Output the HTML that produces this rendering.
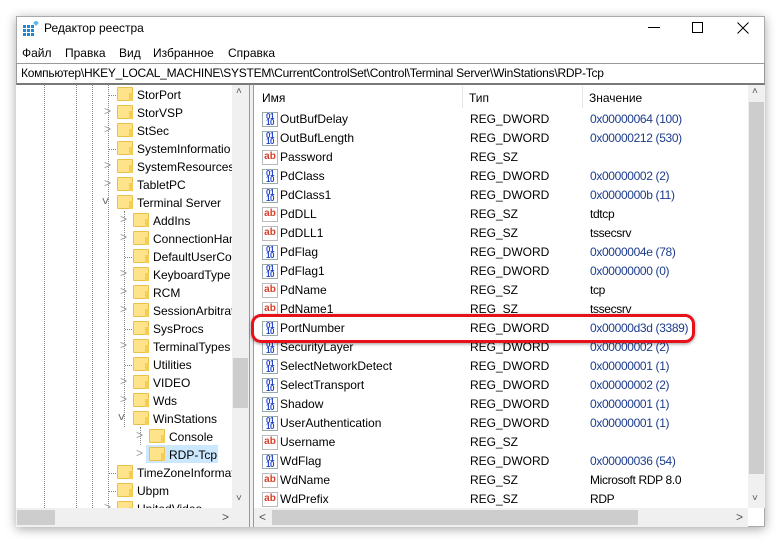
<!DOCTYPE html>
<html><head><meta charset="utf-8"><style>
*{margin:0;padding:0;box-sizing:border-box}
body{width:783px;height:543px;background:#fff;position:relative;overflow:hidden;font-family:"Liberation Sans",sans-serif;font-size:12px;color:#000}
.win{position:absolute;left:16px;top:16px;width:749px;height:511px;background:#fff;box-shadow:0 2px 10px rgba(0,0,0,.35);border:1px solid #aaa}
.a{position:absolute;white-space:nowrap}
.tree{position:absolute;left:16px;top:85px;width:216px;height:423px;overflow:hidden;background:#fff}
.dotv{position:absolute;width:0;border-left:1px dotted #888}
.dh{position:absolute;height:0;width:9px;border-top:1px dotted #888}
.fold{position:absolute;width:16px;height:14px;background:#ffe38a;border:1px solid #e8c04c;border-radius:1px}
.fold:after{content:"";position:absolute;right:-1px;bottom:-1px;width:4px;height:8px;background:#f4cd55}
.chev{position:absolute;color:#999;font-size:12px}
.tt{position:absolute;white-space:nowrap;line-height:18px}
.rows{position:absolute;left:256px;top:110px;width:491px;height:398px;overflow:hidden}
.r{position:absolute;left:0;height:19px;width:491px;line-height:19px;white-space:nowrap}
.r .n{position:absolute;left:24px}.r .t{position:absolute;left:214px}.r .v{position:absolute;left:334px;letter-spacing:-0.35px}
.ib{position:absolute;left:6px;top:2px;width:16px;height:15px;border:1px solid #9aa;background:#fff;font-size:8px;line-height:6px;color:#2244cc;font-weight:bold;text-align:center;padding-top:1px;letter-spacing:-.5px}
.is{position:absolute;left:6px;top:2px;width:16px;height:15px;border:1px solid #bbb;background:#fff;color:#d8402a;font-weight:bold;font-size:10px;line-height:12px;text-align:center}
.blue{color:#1c3c8c}
</style></head><body>
<div class="win"></div>
<svg class="a" style="left:23px;top:21px" width="16" height="16" viewBox="0 0 16 16"><g fill="#1e88d6"><rect x="0" y="4" width="3" height="3"/><rect x="4" y="4" width="3" height="3"/><rect x="8" y="4" width="3" height="3"/><rect x="0" y="8" width="3" height="3"/><rect x="4" y="8" width="3" height="3"/><rect x="8" y="8" width="3" height="3"/><rect x="0" y="12" width="3" height="3"/><rect x="4" y="12" width="3" height="3"/><rect x="8" y="12" width="3" height="3"/></g><rect x="11" y="0" width="4" height="4" fill="#5cb8f0" transform="rotate(45 13 2)"/></svg>
<div class="a" style="left:44px;top:21px;font-size:12px">Редактор реестра</div>
<div class="a" style="left:648px;top:27px;width:12px;height:1px;background:#000"></div>
<div class="a" style="left:692px;top:22px;width:11px;height:11px;border:1px solid #000"></div>
<svg class="a" style="left:737px;top:22px" width="12" height="12"><path d="M0.5 0.5L11.5 11.5M11.5 0.5L0.5 11.5" stroke="#000" stroke-width="1"/></svg>
<div class="a" style="left:22px;top:46px">Файл</div>
<div class="a" style="left:65px;top:46px">Правка</div>
<div class="a" style="left:119px;top:46px">Вид</div>
<div class="a" style="left:153px;top:46px">Избранное</div>
<div class="a" style="left:228px;top:46px">Справка</div>
<div class="a" style="left:16px;top:63px;width:749px;height:22px;border:1px solid #999;border-bottom:2px solid #7a7a7a;background:#fff"></div>
<div class="a" style="left:21px;top:66px;letter-spacing:-0.25px">Компьютер\HKEY_LOCAL_MACHINE\SYSTEM\CurrentControlSet\Control\Terminal Server\WinStations\RDP-Tcp</div>
<div class="tree">
<div class="dotv" style="left:28px;top:0;height:423px"></div>
<div class="dotv" style="left:60px;top:0;height:423px"></div>
<div class="dotv" style="left:76px;top:0;height:423px"></div>
<div class="dotv" style="left:92px;top:0;height:423px"></div>
<div class="dotv" style="left:108px;top:126px;height:216px"></div>
<div class="dotv" style="left:124px;top:342px;height:18px"></div>
<div class="a" style="left:130px;top:360px;width:72px;height:18px;background:#cce8ff"></div>
</div>
<div class="tree" style="background:transparent">
<div class="dh" style="left:93px;top:10px"></div><div class="fold" style="left:101px;top:2px"></div><div class="tt" style="left:121px;top:1px">StorPort</div>
<div class="chev" style="left:88px;top:19px">&gt;</div><div class="fold" style="left:101px;top:20px"></div><div class="tt" style="left:121px;top:19px">StorVSP</div>
<div class="chev" style="left:88px;top:37px">&gt;</div><div class="fold" style="left:101px;top:38px"></div><div class="tt" style="left:121px;top:37px">StSec</div>
<div class="dh" style="left:93px;top:64px"></div><div class="fold" style="left:101px;top:56px"></div><div class="tt" style="left:121px;top:55px">SystemInformatio</div>
<div class="chev" style="left:88px;top:73px">&gt;</div><div class="fold" style="left:101px;top:74px"></div><div class="tt" style="left:121px;top:73px">SystemResources</div>
<div class="chev" style="left:88px;top:91px">&gt;</div><div class="fold" style="left:101px;top:92px"></div><div class="tt" style="left:121px;top:91px">TabletPC</div>
<div class="chev" style="left:86px;top:109px;transform:rotate(90deg);color:#555">&gt;</div><div class="fold" style="left:101px;top:110px"></div><div class="tt" style="left:121px;top:109px">Terminal Server</div>
<div class="chev" style="left:104px;top:127px">&gt;</div><div class="fold" style="left:117px;top:128px"></div><div class="tt" style="left:137px;top:127px">AddIns</div>
<div class="chev" style="left:104px;top:145px">&gt;</div><div class="fold" style="left:117px;top:146px"></div><div class="tt" style="left:137px;top:145px">ConnectionHandler</div>
<div class="dh" style="left:109px;top:172px"></div><div class="fold" style="left:117px;top:164px"></div><div class="tt" style="left:137px;top:163px">DefaultUserConfig</div>
<div class="chev" style="left:104px;top:181px">&gt;</div><div class="fold" style="left:117px;top:182px"></div><div class="tt" style="left:137px;top:181px">KeyboardType M</div>
<div class="chev" style="left:104px;top:199px">&gt;</div><div class="fold" style="left:117px;top:200px"></div><div class="tt" style="left:137px;top:199px">RCM</div>
<div class="chev" style="left:104px;top:217px">&gt;</div><div class="fold" style="left:117px;top:218px"></div><div class="tt" style="left:137px;top:217px">SessionArbitrat</div>
<div class="dh" style="left:109px;top:244px"></div><div class="fold" style="left:117px;top:236px"></div><div class="tt" style="left:137px;top:235px">SysProcs</div>
<div class="chev" style="left:104px;top:253px">&gt;</div><div class="fold" style="left:117px;top:254px"></div><div class="tt" style="left:137px;top:253px">TerminalTypes</div>
<div class="dh" style="left:109px;top:280px"></div><div class="fold" style="left:117px;top:272px"></div><div class="tt" style="left:137px;top:271px">Utilities</div>
<div class="chev" style="left:104px;top:289px">&gt;</div><div class="fold" style="left:117px;top:290px"></div><div class="tt" style="left:137px;top:289px">VIDEO</div>
<div class="chev" style="left:104px;top:307px">&gt;</div><div class="fold" style="left:117px;top:308px"></div><div class="tt" style="left:137px;top:307px">Wds</div>
<div class="chev" style="left:102px;top:325px;transform:rotate(90deg);color:#555">&gt;</div><div class="fold" style="left:117px;top:326px"></div><div class="tt" style="left:137px;top:325px">WinStations</div>
<div class="chev" style="left:120px;top:343px">&gt;</div><div class="fold" style="left:133px;top:344px"></div><div class="tt" style="left:153px;top:343px">Console</div>
<div class="chev" style="left:120px;top:361px">&gt;</div><div class="fold" style="left:133px;top:362px"></div><div class="tt" style="left:153px;top:361px">RDP-Tcp</div>
<div class="dh" style="left:93px;top:388px"></div><div class="fold" style="left:101px;top:380px"></div><div class="tt" style="left:121px;top:379px">TimeZoneInformation</div>
<div class="dh" style="left:93px;top:406px"></div><div class="fold" style="left:101px;top:398px"></div><div class="tt" style="left:121px;top:397px">Ubpm</div>
<div class="chev" style="left:88px;top:415px">&gt;</div><div class="fold" style="left:101px;top:416px"></div><div class="tt" style="left:121px;top:415px">UnitedVideo</div>
</div>
<div class="a" style="left:232px;top:85px;width:17px;height:423px;background:#f0f0f0"></div>
<div class="a" style="left:233px;top:358px;width:15px;height:50px;background:#cdcdcd"></div>
<div class="a" style="left:236px;top:86px;color:#555;font-size:10px">&#708;</div>
<div class="a" style="left:236px;top:493px;color:#555;font-size:10px">&#709;</div>
<div class="a" style="left:249px;top:85px;width:5px;height:442px;background:#f0f0f0;border-left:1px solid #999;border-right:1px solid #999"></div>
<div class="a" style="left:16px;top:508px;width:233px;height:19px;background:#f0f0f0"></div>
<div class="a" style="left:17px;top:510px;width:38px;height:15px;background:#cdcdcd"></div>
<div class="a" style="left:222px;top:510px;color:#555">&gt;</div>
<div class="a" style="left:254px;top:508px;width:494px;height:19px;background:#f0f0f0"></div>
<div class="a" style="left:272px;top:510px;width:366px;height:15px;background:#cdcdcd"></div>
<div class="a" style="left:259px;top:510px;color:#555">&lt;</div>
<div class="a" style="left:736px;top:510px;color:#555">&gt;</div>
<div class="a" style="left:748px;top:85px;width:17px;height:423px;background:#f0f0f0"></div>
<div class="a" style="left:749px;top:102px;width:15px;height:372px;background:#cdcdcd"></div>
<div class="a" style="left:752px;top:86px;color:#555;font-size:10px">&#708;</div>
<div class="a" style="left:752px;top:493px;color:#555;font-size:10px">&#709;</div>
<div class="a" style="left:262px;top:91px">Имя</div>
<div class="a" style="left:462px;top:86px;width:1px;height:22px;background:#e5e5e5"></div>
<div class="a" style="left:469px;top:91px">Тип</div>
<div class="a" style="left:582px;top:86px;width:1px;height:22px;background:#e5e5e5"></div>
<div class="a" style="left:589px;top:91px">Значение</div>
<div class="rows">
<div class="r" style="top:0"><div class="ib">01<br>10</div><span class="n">OutBufDelay</span><span class="t">REG_DWORD</span><span class="v blue">0x00000064 (100)</span></div>
<div class="r" style="top:19px"><div class="ib">01<br>10</div><span class="n">OutBufLength</span><span class="t">REG_DWORD</span><span class="v blue">0x00000212 (530)</span></div>
<div class="r" style="top:38px"><div class="is">ab</div><span class="n">Password</span><span class="t">REG_SZ</span><span class="v"></span></div>
<div class="r" style="top:57px"><div class="ib">01<br>10</div><span class="n">PdClass</span><span class="t">REG_DWORD</span><span class="v blue">0x00000002 (2)</span></div>
<div class="r" style="top:76px"><div class="ib">01<br>10</div><span class="n">PdClass1</span><span class="t">REG_DWORD</span><span class="v blue">0x0000000b (11)</span></div>
<div class="r" style="top:95px"><div class="is">ab</div><span class="n">PdDLL</span><span class="t">REG_SZ</span><span class="v">tdtcp</span></div>
<div class="r" style="top:114px"><div class="is">ab</div><span class="n">PdDLL1</span><span class="t">REG_SZ</span><span class="v">tssecsrv</span></div>
<div class="r" style="top:133px"><div class="ib">01<br>10</div><span class="n">PdFlag</span><span class="t">REG_DWORD</span><span class="v blue">0x0000004e (78)</span></div>
<div class="r" style="top:152px"><div class="ib">01<br>10</div><span class="n">PdFlag1</span><span class="t">REG_DWORD</span><span class="v blue">0x00000000 (0)</span></div>
<div class="r" style="top:171px"><div class="is">ab</div><span class="n">PdName</span><span class="t">REG_SZ</span><span class="v">tcp</span></div>
<div class="r" style="top:190px"><div class="is">ab</div><span class="n">PdName1</span><span class="t">REG_SZ</span><span class="v">tssecsrv</span></div>
<div class="r" style="top:209px"><div class="ib">01<br>10</div><span class="n">PortNumber</span><span class="t">REG_DWORD</span><span class="v blue">0x00000d3d (3389)</span></div>
<div class="r" style="top:228px"><div class="ib">01<br>10</div><span class="n">SecurityLayer</span><span class="t">REG_DWORD</span><span class="v blue">0x00000002 (2)</span></div>
<div class="r" style="top:247px"><div class="ib">01<br>10</div><span class="n">SelectNetworkDetect</span><span class="t">REG_DWORD</span><span class="v blue">0x00000001 (1)</span></div>
<div class="r" style="top:266px"><div class="ib">01<br>10</div><span class="n">SelectTransport</span><span class="t">REG_DWORD</span><span class="v blue">0x00000002 (2)</span></div>
<div class="r" style="top:285px"><div class="ib">01<br>10</div><span class="n">Shadow</span><span class="t">REG_DWORD</span><span class="v blue">0x00000001 (1)</span></div>
<div class="r" style="top:304px"><div class="ib">01<br>10</div><span class="n">UserAuthentication</span><span class="t">REG_DWORD</span><span class="v blue">0x00000001 (1)</span></div>
<div class="r" style="top:323px"><div class="is">ab</div><span class="n">Username</span><span class="t">REG_SZ</span><span class="v"></span></div>
<div class="r" style="top:342px"><div class="ib">01<br>10</div><span class="n">WdFlag</span><span class="t">REG_DWORD</span><span class="v blue">0x00000036 (54)</span></div>
<div class="r" style="top:361px"><div class="is">ab</div><span class="n">WdName</span><span class="t">REG_SZ</span><span class="v">Microsoft RDP 8.0</span></div>
<div class="r" style="top:380px"><div class="is">ab</div><span class="n">WdPrefix</span><span class="t">REG_SZ</span><span class="v">RDP</span></div>
</div>
<div class="a" style="left:251px;top:314px;width:444px;height:29px;border:3px solid #e8101a;border-radius:10px;box-shadow:0 1px 3px rgba(0,0,0,.4)"></div>
</body></html>
